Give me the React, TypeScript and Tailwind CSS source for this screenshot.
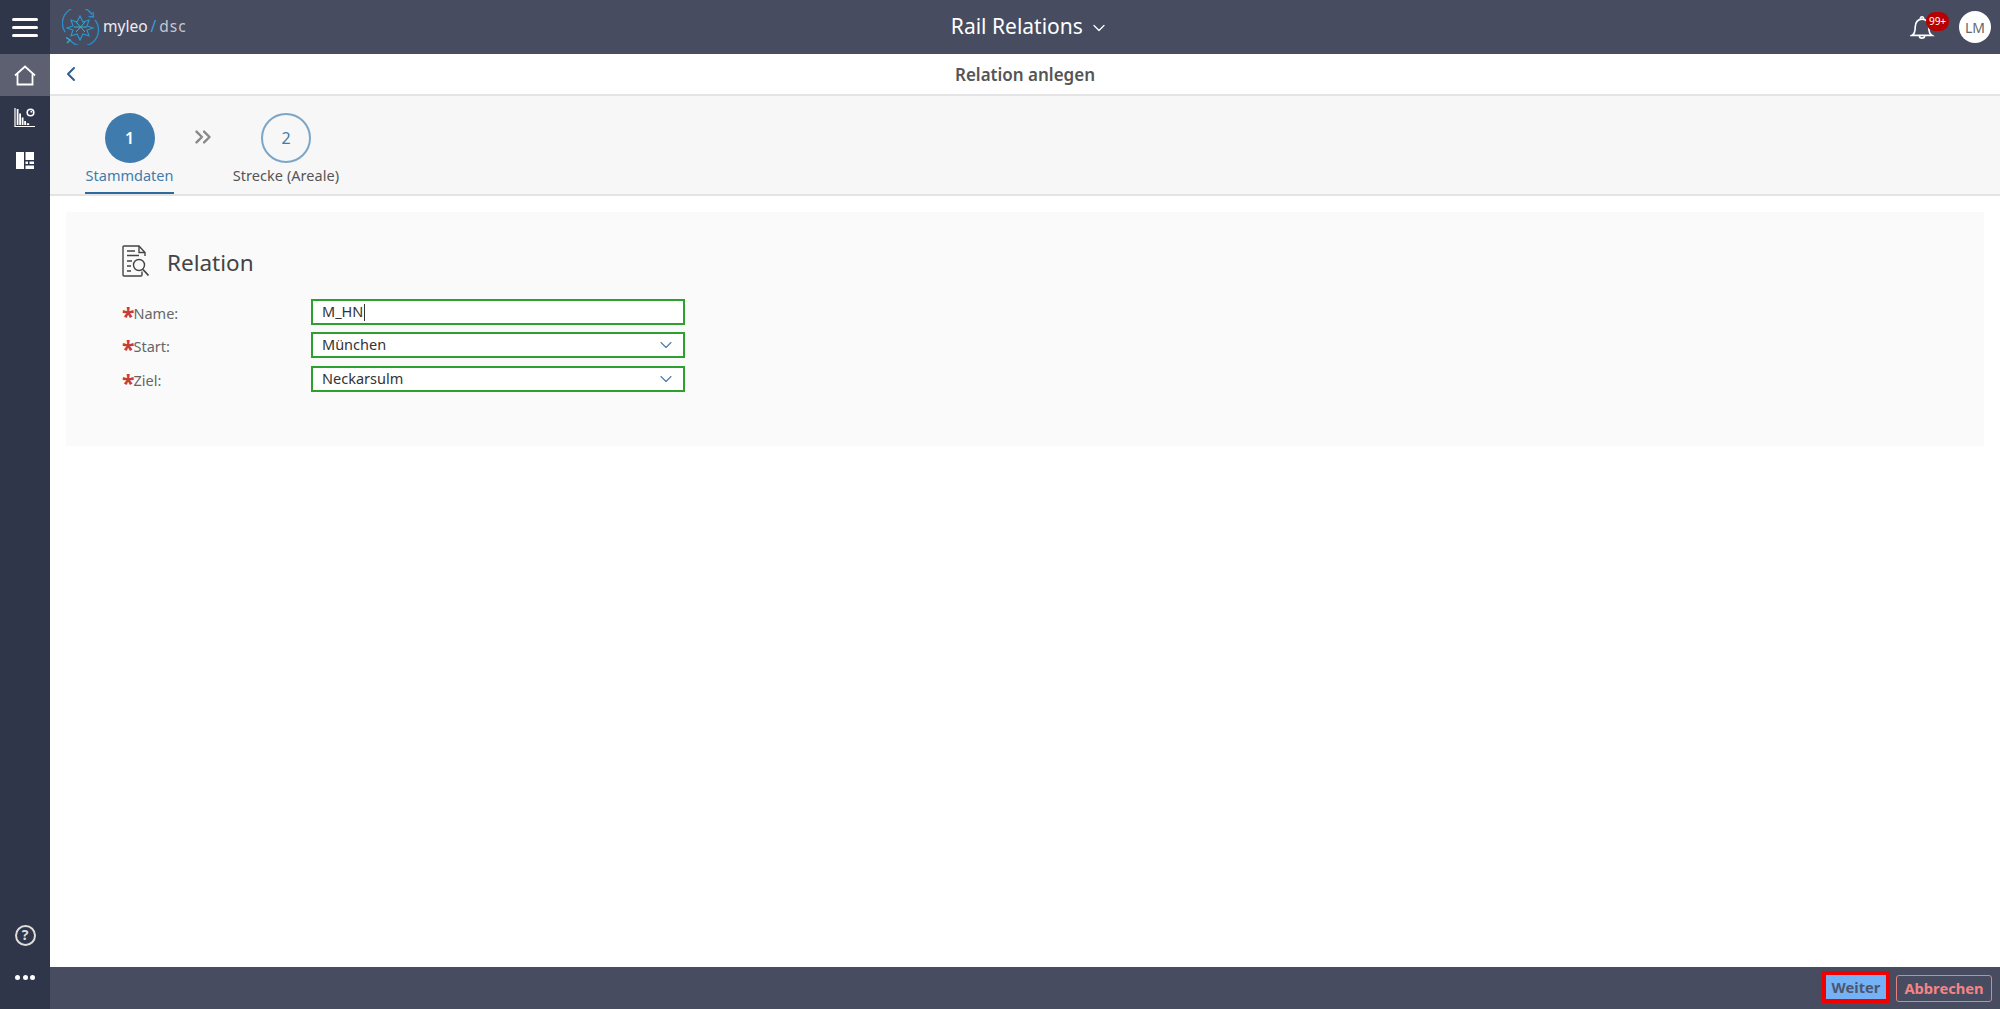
import { ChevronDown, ChevronLeft, ChevronsRight } from 'lucide-react'

function Logo() {
  return (
    <svg width="38" height="36" viewBox="0 0 38 36" fill="none">
      <path d="M30 5.500A16 16 0 0 0 3 23" stroke="#2a8fc9" strokeWidth="1.400" />
      <path d="M31 3l.5 5-5-.5" stroke="#2a8fc9" strokeWidth="1.400" />
      <path d="M33 11A16 16 0 0 1 8 31" stroke="#2a8fc9" strokeWidth="1.400" />
      <path d="M4 28.500l4 2.500-3 3" stroke="#35b4c9" strokeWidth="1.400" />
      <path d="M18 7l3 6 6-2-2 6 6 2-6 2 2 6-6-2-3 6-3-6-6 2 2-6-6-2 6-2-2-6 6 2z" stroke="#2a9ad0" strokeWidth="1.100" />
      <path d="M14 13l9 10M23 13l-9 10M12 18h13" stroke="#36b5d0" strokeWidth="1" />
    </svg>
  )
}

function HomeIcon() {
  return (
    <svg width="22" height="21" viewBox="0 0 22 21" fill="none" stroke="#fff" strokeWidth="1.800">
      <path d="M1 10.500 11 1.500l10 9" />
      <path d="M3.500 9v10.500h15V9" />
    </svg>
  )
}

function ChartIcon() {
  return (
    <svg width="22" height="21" viewBox="0 0 22 21" fill="none">
      <path d="M1 1v18.500h20" stroke="#fff" strokeWidth="1.200" />
      <path d="M2.700 18V2h1.800v16zM5.200 18V6.500h1.800V18zM7.700 18v-7.500h1.800V18zM10.200 18v-4h1.800v4zM12.700 18v-1.800h2.500V18z" fill="#fff" />
      <circle cx="16.500" cy="5.500" r="3.300" stroke="#fff" strokeWidth="1.600" />
      <path d="M16.500 5.500V3.500a2 2 0 0 1 2 2z" fill="#fff" />
    </svg>
  )
}

function PanelIcon() {
  return (
    <svg width="18" height="17" viewBox="0 0 18 17" fill="#fff">
      <path d="M0 0h8v17H0zM9.500 0H18v8H9.500zM9.500 9.500H12V12H9.500zM13.500 9.500H18V12h-4.500zM9.500 13.500H18V17H9.500z" />
    </svg>
  )
}

function RelationIcon() {
  return (
    <svg width="30" height="32" viewBox="0 0 30 32" fill="none" stroke="#444" strokeWidth="1.400">
      <path d="M20 26.500V30a1 1 0 0 1-1 1H2a1 1 0 0 1-1-1V2a1 1 0 0 1 1-1h15l6 6.500V11" />
      <path d="M17 1v6.500h6M5 6h8M5 10.500h12M5 16h5M5 21h4M5 26h4" />
      <circle cx="17" cy="20" r="5.500" />
      <path d="M21 24.500 26.500 30.500" strokeWidth="1.800" />
    </svg>
  )
}

function BellIcon() {
  return (
    <svg width="25" height="26" viewBox="0 0 24 25" fill="none" stroke="#fff" strokeWidth="1.600">
      <path d="M2 20.500c2.500-1.500 3-4 3-8 0-5 3-7.500 6.500-7.500s6.500 2.500 6.500 7.500c0 4 .5 6.500 3 8z" />
      <path d="M10 4.500c0-2.500 3-2.500 3 0M9 21c0 3 5 3 5 0" />
    </svg>
  )
}

function Field({ label, value, select, caret }: { label: string; value: string; select?: boolean; caret?: boolean }) {
  return (
    <div className="flex h-[33.250px] items-start">
      <div className="flex w-[189px] items-center pt-[4px] text-[14.500px] text-[#666]">
        <span className="mr-[-1px] h-[22px] text-[23px] leading-[26px] font-bold text-[#c83c3c]">*</span>
        <span>{label}</span>
      </div>
      <div className="flex h-[26px] w-[374px] items-center justify-between border-2 border-[#2ea02e] bg-white pr-[7px] pl-[9px] text-[14.500px] text-[#333]">
        <span className="flex items-center">
          {value}
          {caret && <span className="ml-[0.500px] h-[17px] w-px bg-[#333]" />}
        </span>
        {select && <ChevronDown className="h-[20px] w-[20px] text-[#4f7aa3]" strokeWidth={1.300} />}
      </div>
    </div>
  )
}

export default function App() {
  return (
    <div className="flex h-[1009px] w-[2000px] overflow-hidden bg-white font-['Noto_Sans','Open_Sans',sans-serif]">
      <aside className="flex w-[50px] flex-col bg-[#30364a]">
        <div className="flex h-[54px] flex-col items-center justify-center gap-[5px]">
          <span className="h-[3px] w-[26px] rounded-sm bg-white" />
          <span className="h-[3px] w-[26px] rounded-sm bg-white" />
          <span className="h-[3px] w-[26px] rounded-sm bg-white" />
        </div>
        <div className="flex h-[42px] items-center justify-center bg-[#5c6070]">
          <HomeIcon />
        </div>
        <div className="flex h-[43px] items-center justify-center">
          <ChartIcon />
        </div>
        <div className="flex h-[42px] items-center justify-center">
          <PanelIcon />
        </div>
        <div className="mt-auto mb-[10px] flex h-[44px] items-center justify-center">
          <div className="flex h-[21px] w-[21px] items-center justify-center rounded-full border-2 border-[#ddd] text-[14px] leading-none font-bold text-[#ddd]">?</div>
        </div>
        <div className="mb-[21px] flex h-[21px] items-center justify-center gap-[2.500px]">
          <span className="h-[5px] w-[5px] rounded-full bg-white" />
          <span className="h-[5px] w-[5px] rounded-full bg-white" />
          <span className="h-[5px] w-[5px] rounded-full bg-white" />
        </div>
      </aside>

      <div className="flex min-w-0 flex-1 flex-col">
        <header className="flex h-[54px] items-center bg-[#474c61] pl-[12px]">
          <Logo />
          <span className="ml-[3px] text-[15.500px] text-[#eee]">myleo</span>
          <span className="mx-[3px] text-[15.500px] text-[#3a9fd8]">/</span>
          <span className="text-[15.500px] tracking-[1px] text-[#c4c6ce]">dsc</span>
          <div className="flex flex-1 items-center justify-center pr-[37px]">
            <span className="text-[21px] text-white">Rail Relations</span>
            <ChevronDown className="mt-[2px] ml-[6px] h-[20px] w-[20px] text-white" strokeWidth={1.500} />
          </div>
          <div className="relative mr-[18px]">
            <BellIcon />
            <span className="absolute top-[-2px] left-[16px] flex h-[19px] w-[23px] items-center justify-center rounded-[9px] bg-[#b80000] text-[10px] text-white">99+</span>
          </div>
          <div className="mr-[9px] ml-[6px] flex h-[32px] w-[32px] items-center justify-center rounded-full bg-white text-[14px] text-[#666]">LM</div>
        </header>

        <div className="relative flex h-[42px] items-center justify-center border-b-2 border-[#e4e4e4] bg-white pt-px">
          <ChevronLeft className="absolute top-[8px] left-[9px] h-[24px] w-[24px] text-[#2f5f8f]" strokeWidth={2} />
          <span className="text-[17px] font-semibold text-[#555]">Relation anlegen</span>
        </div>

        <div className="flex h-[100px] items-start border-b-2 border-[#e4e4e4] bg-[#f7f7f7] pl-[35px]">
          <div className="flex h-[98px] w-[89px] flex-col items-center border-b-2 border-[#2f6a9f] pt-[17px]">
            <div className="flex h-[50px] w-[50px] items-center justify-center rounded-full bg-[#3f7cad] text-[16px] font-semibold text-white">1</div>
            <span className="mt-[2px] text-[14.500px] whitespace-nowrap text-[#3f7cad]">Stammdaten</span>
          </div>
          <ChevronsRight className="mt-[28px] ml-[16px] h-[26px] w-[26px] text-[#888]" strokeWidth={2.200} />
          <div className="ml-[13px] flex w-[114px] flex-col items-center pt-[17px]">
            <div className="flex h-[50px] w-[50px] items-center justify-center rounded-full border-2 border-[#7ba6c8] text-[16px] text-[#3f7cad]">2</div>
            <span className="mt-[2px] text-[14.500px] tracking-[0.050px] whitespace-nowrap text-[#555]">Strecke (Areale)</span>
          </div>
        </div>

        <main className="flex-1 px-[16px] pt-[16px]">
          <section className="h-[234px] bg-[#fafafa] pt-[33px] pl-[56px]">
            <div className="flex h-[32px] items-center">
              <RelationIcon />
              <span className="ml-[15px] pt-[4px] text-[22.500px] text-[#444]">Relation</span>
            </div>
            <div className="mt-[22px]">
              <Field label="Name:" value="M_HN" caret />
              <Field label="Start:" value="München" select />
              <Field label="Ziel:" value="Neckarsulm" select />
            </div>
          </section>
        </main>

        <footer className="flex h-[42px] items-center justify-end gap-[6px] bg-[#474c61] pr-[8px]">
          <button className="mb-[2px] h-[32px] w-[68px] border-4 border-[#f00000] bg-[#74b2f5] text-[14.700px] font-bold text-[#4d5670]">Weiter</button>
          <button className="mt-px h-[27px] w-[96px] rounded-[3px] border border-[#e88080] text-[14.700px] font-bold text-[#f58585]">Abbrechen</button>
        </footer>
      </div>
    </div>
  )
}
